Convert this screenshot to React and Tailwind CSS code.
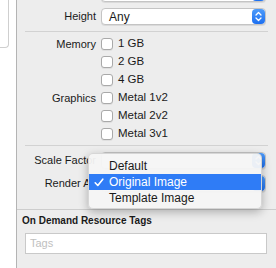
import React from "react";

const font = { fontFamily: '"Liberation Sans", Arial, sans-serif' };

function Stepper() {
  return (
    <div className="w-[13px] h-full rounded-[4px] bg-gradient-to-b from-[#4d9bfa] to-[#1c6ff0] flex items-center justify-center shrink-0">
      <svg width="7" height="11" viewBox="0 0 7 11" fill="none" stroke="#fff" strokeWidth="1.3" strokeLinecap="round" strokeLinejoin="round">
        <path d="M1 4 L3.5 1.5 L6 4" />
        <path d="M1 7 L3.5 9.5 L6 7" />
      </svg>
    </div>
  );
}

function Popup({ value }) {
  return (
    <div className="h-[17px] w-[165px] flex bg-white border border-[#c4c4c4] rounded-[4px] shadow-[0_1px_0_rgba(0,0,0,0.08)]">
      <div className="flex-1 flex items-center pl-[7px] text-[12px] text-[#1a1a1a]">{value}</div>
      <Stepper />
    </div>
  );
}

function Check({ label }) {
  return (
    <div className="h-[18px] flex items-center">
      <div className="w-[12px] h-[12px] bg-white border border-[#a9a9a9] rounded-[3px] shadow-[0_1px_0_rgba(0,0,0,0.06)]" />
      <span className="ml-[5px] text-[11.5px] text-[#1a1a1a]">{label}</span>
    </div>
  );
}

function Row({ label, children, className = "" }) {
  return (
    <div className={"flex items-center " + className}>
      <div className="w-[79px] text-right text-[11px] text-[#1a1a1a] whitespace-nowrap">{label}</div>
      <div className="ml-[5px]">{children}</div>
    </div>
  );
}

export default function App() {
  return (
    <div className="w-[276px] h-[268px] flex overflow-hidden bg-white" style={font}>
      {/* left canvas */}
      <div className="w-[16px] shrink-0 bg-white">
        <div className="w-[9px] h-[48px] border-r border-b border-[#cfcfcf] rounded-br-[4px]" />
      </div>

      {/* inspector */}
      <div className="relative flex-1 bg-[#ededed] border-l border-[#b4b4b4] flex flex-col">
        <div className="-mt-[15px] ml-[84px]">
          <Popup value="" />
        </div>

        <Row label="Height" className="mt-[6px]">
          <Popup value="Any" />
        </Row>

        <div className="mt-[6px] ml-[8px] mr-[8px] h-px bg-[#d2d2d2]" />

        <div className="mt-[3px] flex flex-col">
          <Row label="Memory"><Check label="1 GB" /></Row>
          <Row label=""><Check label="2 GB" /></Row>
          <Row label=""><Check label="4 GB" /></Row>
          <Row label="Graphics"><Check label="Metal 1v2" /></Row>
          <Row label=""><Check label="Metal 2v2" /></Row>
          <Row label=""><Check label="Metal 3v1" /></Row>
        </div>

        <div className="mt-[2px] ml-[8px] mr-[8px] h-px bg-[#d2d2d2]" />

        <Row label="Scale Factor" className="mt-[6px]">
          <Popup value="" />
        </Row>
        <Row label="Render As" className="mt-[6px]">
          <Popup value="" />
        </Row>

        <div className="mt-[17px] h-px bg-[#cdcdcd]" />

        <div className="h-[20px] flex items-center pl-[5px] text-[10px] font-bold text-[#1a1a1a]">
          On Demand Resource Tags
        </div>

        <div className="mt-[3px] ml-[8px] w-[242px] h-[21px] bg-white border border-[#c9c9c9] flex items-center pl-[4px] text-[11px] text-[#c0c0c0]">
          Tags
        </div>

        {/* open popup menu */}
        <div className="absolute left-[71px] top-[153px] w-[174px] h-[56px] bg-[#f6f6f6]/95 rounded-[5px] border border-[#c8c8c8]/70 shadow-[0_3px_10px_rgba(0,0,0,0.28)] flex flex-col pt-[4px] text-[12px] text-[#1a1a1a]">
          <div className="h-[16px] flex items-center pl-[20px]">Default</div>
          <div className="h-[16px] flex items-center bg-[#2f7cf6] text-white">
            <span className="w-[20px] flex justify-center">
              <svg width="10" height="9" viewBox="0 0 10 9" fill="none" stroke="#fff" strokeWidth="1.6" strokeLinecap="round" strokeLinejoin="round">
                <path d="M1.2 4.8 L3.8 7.5 L8.8 1.2" />
              </svg>
            </span>
            Original Image
          </div>
          <div className="h-[16px] flex items-center pl-[20px]">Template Image</div>
        </div>
      </div>
    </div>
  );
}
